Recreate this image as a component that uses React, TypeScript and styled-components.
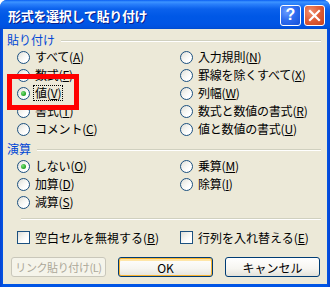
import React from 'react'
import styled, { createGlobalStyle } from 'styled-components'

const GlobalStyle = createGlobalStyle`
  html, body {
    margin: 0;
    padding: 0;
    background: #ffffff;
  }
  body {
    font-family: "Noto Sans CJK JP", "Liberation Sans", sans-serif;
    font-size: 12px;
  }
`

type Opt = { label: string; hot: string; checked?: boolean; focused?: boolean }

const pasteLeft: Opt[] = [
  { label: 'すべて', hot: 'A' },
  { label: '数式', hot: 'F' },
  { label: '値', hot: 'V', checked: true, focused: true },
  { label: '書式', hot: 'T' },
  { label: 'コメント', hot: 'C' },
]

const pasteRight: Opt[] = [
  { label: '入力規則', hot: 'N' },
  { label: '罫線を除くすべて', hot: 'X' },
  { label: '列幅', hot: 'W' },
  { label: '数式と数値の書式', hot: 'R' },
  { label: '値と数値の書式', hot: 'U' },
]

const opLeft: Opt[] = [
  { label: 'しない', hot: 'O', checked: true },
  { label: '加算', hot: 'D' },
  { label: '減算', hot: 'S' },
]

const opRight: Opt[] = [
  { label: '乗算', hot: 'M' },
  { label: '除算', hot: 'I' },
]

export default function App(): JSX.Element {
  return (
    <>
      <GlobalStyle />
      <WindowSCP>
        <TitleBarSCP>
          <TitleTextSCP>形式を選択して貼り付け</TitleTextSCP>
          <CaptionButtonSCP $kind={'help'}>?</CaptionButtonSCP>
          <CaptionButtonSCP $kind={'close'}>
            <svg width="13" height="13" viewBox="0 0 13 13">
              <path d="M2 2 L11 11 M11 2 L2 11" stroke="#fff" strokeWidth="2.2" strokeLinecap="square" />
            </svg>
          </CaptionButtonSCP>
        </TitleBarSCP>

        <BodySCP>
          <GroupHeaderSCP>
            <span>貼り付け</span>
            <HeaderLineSCP />
          </GroupHeaderSCP>
          <OptionGridSCP>
            <ColumnSCP>
              {pasteLeft.map(o => <RadioOption key={o.hot} {...o} />)}
            </ColumnSCP>
            <ColumnSCP>
              {pasteRight.map(o => <RadioOption key={o.hot} {...o} />)}
            </ColumnSCP>
          </OptionGridSCP>

          <GroupHeaderSCP $top={5}>
            <span>演算</span>
            <HeaderLineSCP />
          </GroupHeaderSCP>
          <OptionGridSCP>
            <ColumnSCP>
              {opLeft.map(o => <RadioOption key={o.hot} {...o} />)}
            </ColumnSCP>
            <ColumnSCP>
              {opRight.map(o => <RadioOption key={o.hot} {...o} />)}
            </ColumnSCP>
          </OptionGridSCP>

          <SeparatorSCP />

          <OptionGridSCP>
            <CheckRowSCP>
              <CheckBoxSCP />
              <span>空白セルを無視する(<u>B</u>)</span>
            </CheckRowSCP>
            <CheckRowSCP>
              <CheckBoxSCP />
              <span>行列を入れ替える(<u>E</u>)</span>
            </CheckRowSCP>
          </OptionGridSCP>

          <ButtonRowSCP>
            <ButtonSCP $disabled>リンク貼り付け(L)</ButtonSCP>
            <ButtonSCP $default>OK</ButtonSCP>
            <ButtonSCP>キャンセル</ButtonSCP>
          </ButtonRowSCP>
        </BodySCP>

        {/* 赤枠の注釈 */}
        <HighlightSCP />
      </WindowSCP>
    </>
  )
}

function RadioOption(props: Opt): JSX.Element {
  return (
    <RadioRowSCP>
      <RadioCircleSCP>{props.checked && <RadioDotSCP />}</RadioCircleSCP>
      <OptionLabelSCP $focused={props.focused}>
        {props.label}(<u>{props.hot}</u>)
      </OptionLabelSCP>
    </RadioRowSCP>
  )
}

const WindowSCP = styled.div`
  position: relative;
  width: 330px;
  height: 287px;
  display: flex;
  flex-direction: column;
  background: linear-gradient(to right, #0842d0 0px, #0055e5 3px, #0055e5 327px, #0842d0 330px);
  border-radius: 7px 7px 0 0;
  overflow: hidden;
`

const TitleBarSCP = styled.div`
  height: 29px;
  flex: none;
  display: flex;
  align-items: center;
  padding: 0 5px 0 8px;
  gap: 3px;
  background: linear-gradient(
    to bottom,
    #0a5ef2 0px,
    #3d95ff 2px,
    #2a80fb 4px,
    #0b61ec 9px,
    #0058e6 16px,
    #0055e5 24px,
    #0050dc 28px,
    #0048c8 29px
  );
`

const TitleTextSCP = styled.div`
  flex: 1;
  color: #ffffff;
  font-weight: bold;
  font-size: 13px;
  letter-spacing: -0.3px;
  text-shadow: 1px 1px 0 #0a1e8c;
  white-space: nowrap;
  margin-top: 1px;
`

const CaptionButtonSCP = styled.div<{ $kind: 'help' | 'close' }>`
  width: 19px;
  height: 19px;
  border: 1px solid #ffffff;
  border-radius: 3px;
  display: flex;
  align-items: center;
  justify-content: center;
  color: #ffffff;
  font-family: "Liberation Sans", sans-serif;
  font-weight: bold;
  font-size: 16px;
  margin-top: 1px;
  background: ${p =>
    p.$kind === 'close'
      ? 'radial-gradient(circle at 30% 30%, #f09070 0%, #e0603a 45%, #c8401c 100%)'
      : 'radial-gradient(circle at 30% 30%, #6a9cff 0%, #2f6df0 45%, #1350d8 100%)'};
`

const BodySCP = styled.div`
  flex: 1;
  margin: 0 3px 3px 3px;
  background: #ece9d8;
  display: flex;
  flex-direction: column;
  padding: 5px 6px 0 4px;
  color: #000000;
`

const GroupHeaderSCP = styled.div<{ $top?: number }>`
  display: flex;
  align-items: center;
  height: 12px;
  line-height: 12px;
  margin-top: ${p => p.$top ?? 0}px;
  color: #0046d5;
  font-size: 12px;
  gap: 6px;
`

const HeaderLineSCP = styled.div`
  flex: 1;
  height: 0;
  border-top: 1px solid #d0d0bf;
  border-bottom: 1px solid #ffffff;
  margin-top: 1px;
`

const OptionGridSCP = styled.div`
  display: grid;
  grid-template-columns: 163px 1fr;
  padding-left: 10px;
  margin-top: 2px;
`

const ColumnSCP = styled.div`
  display: flex;
  flex-direction: column;
`

const RadioRowSCP = styled.div`
  height: 18px;
  display: flex;
  align-items: center;
  gap: 4px;
`

const RadioCircleSCP = styled.div`
  width: 11px;
  height: 11px;
  flex: none;
  border: 1px solid #1c5180;
  border-radius: 50%;
  background: linear-gradient(135deg, #dcdcd7 0%, #f4f4f0 40%, #ffffff 70%);
  display: flex;
  align-items: center;
  justify-content: center;
`

const RadioDotSCP = styled.div`
  width: 5px;
  height: 5px;
  border-radius: 50%;
  background: radial-gradient(circle at 35% 35%, #7be37a 0%, #21a121 70%);
`

const OptionLabelSCP = styled.span<{ $focused?: boolean }>`
  white-space: nowrap;
  line-height: 14px;
  padding: 0 1px;
  letter-spacing: -0.2px;
  outline: ${p => (p.$focused ? '1px dotted #000000' : 'none')};
  outline-offset: 0px;
`

const SeparatorSCP = styled.div`
  margin: 7px 0 0 14px;
  border-top: 1px solid #d0d0bf;
  border-bottom: 1px solid #ffffff;
`

const CheckRowSCP = styled.div`
  height: 18px;
  margin-top: 6px;
  display: flex;
  align-items: center;
  gap: 5px;
  white-space: nowrap;
`

const CheckBoxSCP = styled.div`
  width: 11px;
  height: 11px;
  flex: none;
  border: 1px solid #1c5180;
  background: linear-gradient(135deg, #dcdcd7 0%, #f4f4f0 40%, #ffffff 70%);
`

const ButtonRowSCP = styled.div`
  display: flex;
  gap: 12px;
  padding-left: 4px;
  margin-top: 11px;
`

const ButtonSCP = styled.div<{ $default?: boolean; $disabled?: boolean }>`
  width: 95px;
  height: 20px;
  box-sizing: border-box;
  border-radius: 3px;
  display: flex;
  align-items: center;
  justify-content: center;
  white-space: nowrap;
  overflow: hidden;
  font-size: ${p => (p.$disabled ? '11px' : '12px')};
  letter-spacing: ${p => (p.$disabled ? '-0.4px' : '0')};
  color: ${p => (p.$disabled ? '#aca899' : '#000000')};
  border: 1px solid ${p => (p.$disabled ? '#c9c7ba' : '#003c74')};
  background: ${p =>
    p.$disabled
      ? '#f5f4ea'
      : 'linear-gradient(to bottom, #ffffff 0%, #f6f5f0 60%, #e3e2da 100%)'};
  box-shadow: ${p =>
    p.$default ? 'inset 0 0 0 1px #f8b330, inset 0 2px 0 1px #ffe6a8' : 'none'};
`

const HighlightSCP = styled.div`
  position: absolute;
  left: 7px;
  top: 74px;
  width: 72px;
  height: 36px;
  box-sizing: border-box;
  border: 5px solid #ff0000;
  pointer-events: none;
`
